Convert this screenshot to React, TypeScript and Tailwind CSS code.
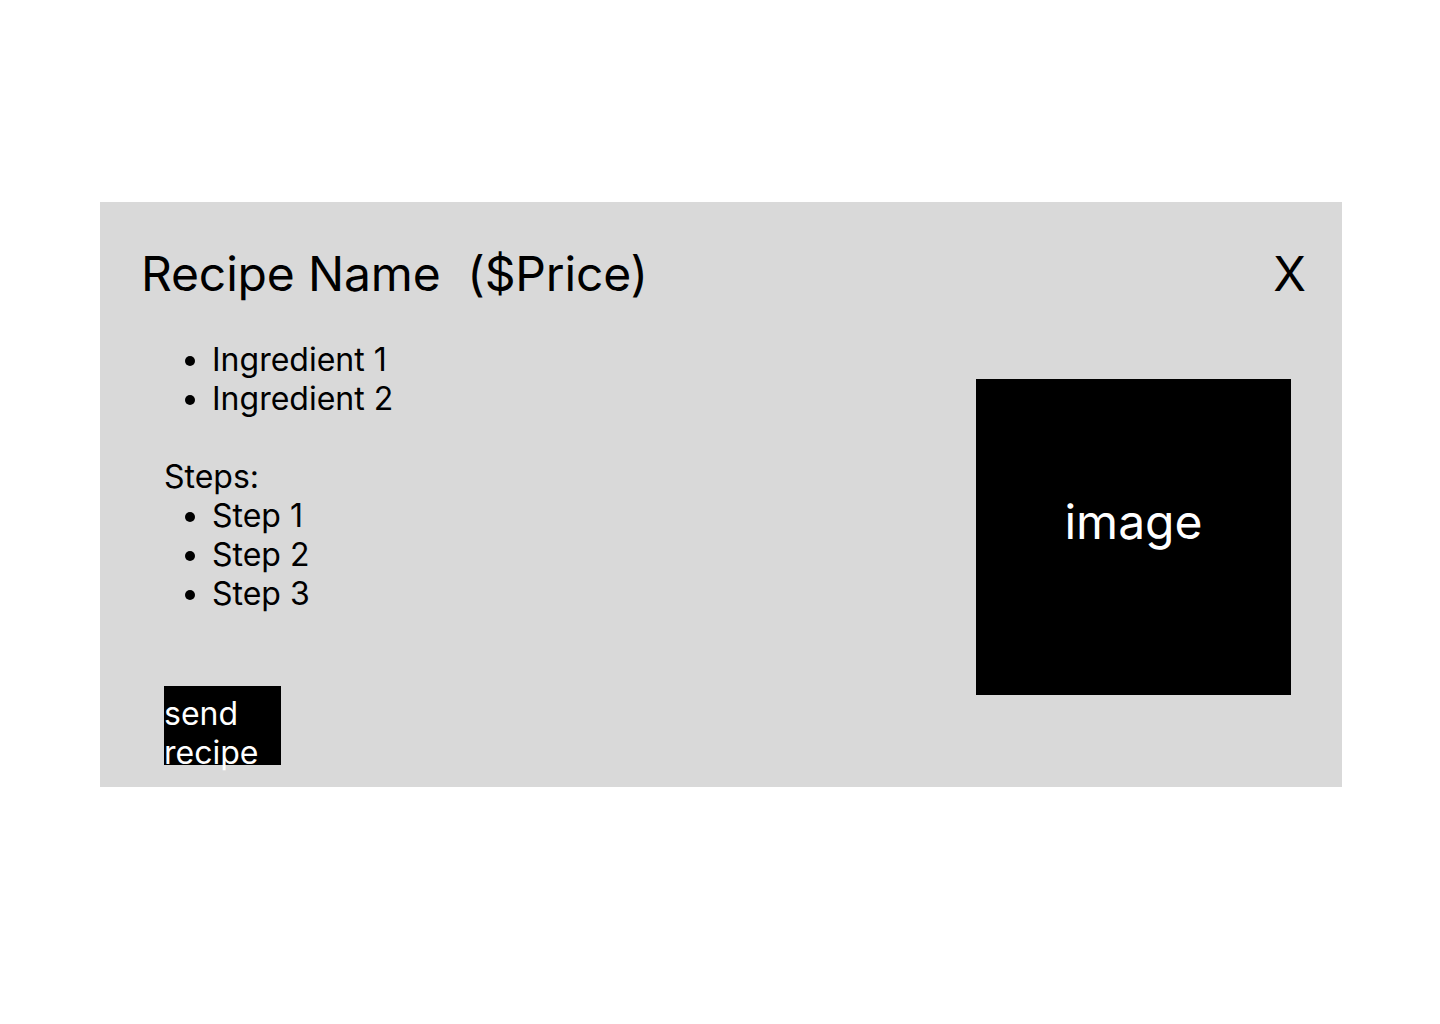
export default function App() {
  return (
    <div className="min-h-[1024px] w-[1440px] bg-white pt-[202px] pl-[100px]" style={{ fontFamily: "Inter, 'Noto Sans', sans-serif" }}>
      <div className="flex h-[585px] w-[1242px] flex-col bg-[#d9d9d9] text-black">
        <div className="flex items-start justify-between pl-[41px] pr-[36px] pt-[43px]">
          <h1 className="text-[48px] leading-[58px] font-normal whitespace-pre tracking-[-0.15px]">Recipe Name  ($Price)</h1>
          <button className="text-[48px] leading-[58px] font-normal">X</button>
        </div>
        <div className="flex flex-1 items-start justify-between pl-[64px] pr-[51px]">
          <div className="mt-[37px] flex flex-col text-[32px] leading-[39px]">
            <ul className="list-disc pl-[48px]">
              <li>Ingredient 1</li>
              <li>Ingredient 2</li>
            </ul>
            <p className="mt-[39px]">Steps:</p>
            <ul className="list-disc pl-[48px]">
              <li>Step 1</li>
              <li>Step 2</li>
              <li>Step 3</li>
            </ul>
            <button className="mt-[73px] flex h-[79px] w-[117px] flex-col items-start overflow-visible bg-black pt-[8px] text-left text-[32px] leading-[39px] text-white">
              <span className="block">send recipe</span>
            </button>
          </div>
          <div className="mt-[76px] flex h-[316px] w-[315px] justify-center bg-black pt-[114px]">
            <span className="text-[48px] leading-[58px] text-white">image</span>
          </div>
        </div>
      </div>
    </div>
  );
}
